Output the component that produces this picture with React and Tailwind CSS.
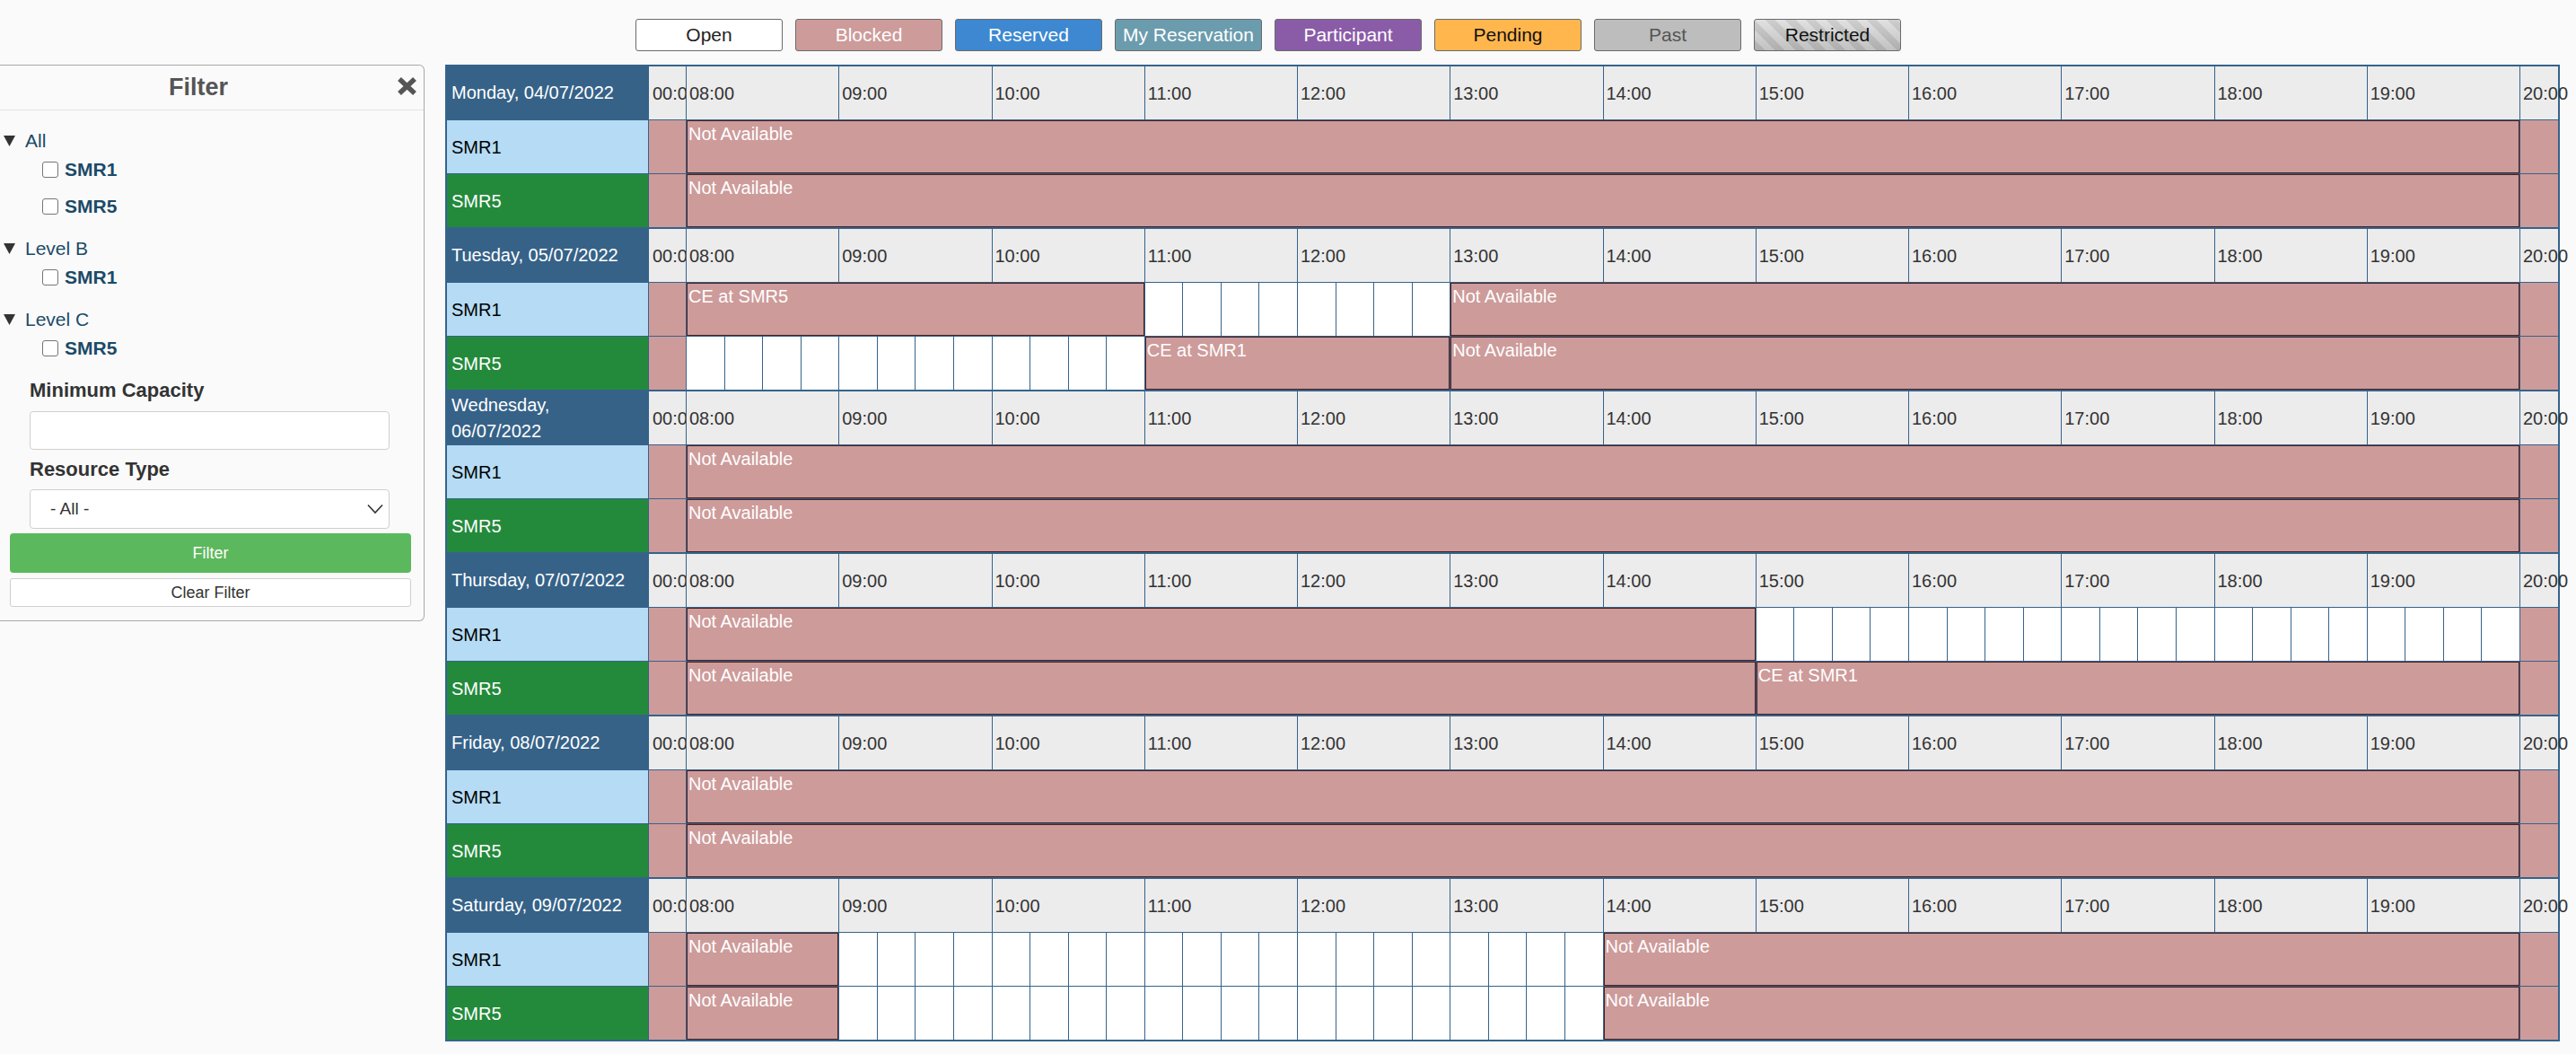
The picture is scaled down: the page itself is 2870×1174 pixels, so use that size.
import React from 'react';

const HOURS = ['08:00','09:00','10:00','11:00','12:00','13:00','14:00','15:00','16:00','17:00','18:00','19:00'];

const SPAN = {
  4: 'col-span-4',
  8: 'col-span-8',
  12: 'col-span-12',
  20: 'col-span-20',
  24: 'col-span-24',
  28: 'col-span-28',
  48: 'col-span-48',
};

const NA = 'Not Available';
const FULL = [['b', 48, NA]];

const DAYS = [
  { label: 'Monday, 04/07/2022', r1: FULL, r5: FULL },
  {
    label: 'Tuesday, 05/07/2022',
    r1: [['b', 12, 'CE at SMR5'], ['o', 8], ['b', 28, NA]],
    r5: [['o', 12], ['b', 8, 'CE at SMR1'], ['b', 28, NA]],
  },
  { label: 'Wednesday, 06/07/2022', r1: FULL, r5: FULL },
  {
    label: 'Thursday, 07/07/2022',
    r1: [['b', 28, NA], ['o', 20]],
    r5: [['b', 28, NA], ['b', 20, 'CE at SMR1']],
  },
  { label: 'Friday, 08/07/2022', r1: FULL, r5: FULL },
  {
    label: 'Saturday, 09/07/2022',
    r1: [['b', 4, NA], ['o', 20], ['b', 24, NA]],
    r5: [['b', 4, NA], ['o', 20], ['b', 24, NA]],
  },
];

const LEGEND = [
  { t: 'Open', c: 'bg-white text-[#222]' },
  { t: 'Blocked', c: 'bg-[#cd9b9a] text-white' },
  { t: 'Reserved', c: 'bg-[#3e88d1] text-white' },
  { t: 'My Reservation', c: 'bg-[#6b9cae] text-white' },
  { t: 'Participant', c: 'bg-[#8a5ca8] text-white' },
  { t: 'Pending', c: 'bg-[#ffb74d] text-[#111]' },
  { t: 'Past', c: 'bg-[#bdbdbd] text-[#555]' },
  {
    t: 'Restricted',
    c: 'text-[#111] bg-[image:linear-gradient(to_bottom,rgba(255,255,255,0.15),rgba(0,0,0,0.12)),repeating-linear-gradient(45deg,#c6c6c6_0px,#c6c6c6_8px,#dcdcdc_8px,#dcdcdc_16px)]',
  },
];

function Segments({ segs }) {
  const out = [];
  segs.forEach((s, i) => {
    if (s[0] === 'b') {
      out.push(
        <div
          key={i}
          className={`${SPAN[s[1]]} bg-[#cd9b9a] border border-[#4a2222] text-white text-[20px] leading-[1.43] pl-px overflow-hidden whitespace-nowrap`}
        >
          {s[2]}
        </div>
      );
    } else {
      for (let k = 0; k < s[1]; k++) {
        out.push(<div key={`${i}-${k}`} className="bg-white" />);
      }
    }
  });
  return out;
}

function Day({ day }) {
  return (
    <div className="grid grid-cols-[224px_41px_repeat(48,minmax(0,1fr))_42px] grid-rows-[59px_59px_59px] gap-px bg-[#35638b]">
      {/* header row */}
      <div className="bg-[#366288] text-white text-[20px] leading-[1.43] pl-[5px] pr-[5px] flex items-center">
        {day.label}
      </div>
      <div className="bg-[#ececec] text-[#333] text-[20px] pl-[4px] flex items-center overflow-hidden whitespace-nowrap">
        00:00
      </div>
      {HOURS.map((h) => (
        <div key={h} className="col-span-4 bg-[#ececec] text-[#333] text-[20px] pl-[3px] flex items-center whitespace-nowrap">
          {h}
        </div>
      ))}
      <div className="bg-[#ececec] text-[#333] text-[20px] pl-[3px] flex items-center whitespace-nowrap">
        20:00
      </div>

      {/* SMR1 */}
      <div className="bg-[#b5dbf5] text-black text-[20px] pl-[5px] flex items-center">SMR1</div>
      <div className="bg-[#cd9b9a]" />
      <Segments segs={day.r1} />
      <div className="bg-[#cd9b9a]" />

      {/* SMR5 */}
      <div className="bg-[#238a3c] text-white text-[20px] pl-[5px] flex items-center">SMR5</div>
      <div className="bg-[#cd9b9a]" />
      <Segments segs={day.r5} />
      <div className="bg-[#cd9b9a]" />
    </div>
  );
}

function Tri() {
  return (
    <svg width="13" height="12" viewBox="0 0 13 12" className="shrink-0">
      <polygon points="0,0 13,0 6.5,12" fill="#333" />
    </svg>
  );
}

function CheckItem({ label }) {
  return (
    <div className="h-[34px] flex items-center pl-[47px]">
      <div className="w-[18px] h-[18px] rounded-[3px] border border-[#767676] bg-white shrink-0" />
      <span className="ml-[7px] font-bold text-[21px] text-[#1b4a68]">{label}</span>
    </div>
  );
}

function Group({ title, items, last }) {
  return (
    <div className={last ? '' : 'mb-[15px]'}>
      <div className="h-[30px] flex items-center pl-[4px]">
        <Tri />
        <span className="ml-[11px] text-[21px] text-[#1b4a68]">{title}</span>
      </div>
      <div className="flex flex-col gap-[7px]">
        {items.map((it) => (
          <CheckItem key={it} label={it} />
        ))}
      </div>
    </div>
  );
}

function FilterPanel() {
  return (
    <div className="w-[473px] h-[620px] shrink-0 border border-l-0 border-[#a8a8a8] rounded-r-[6px] bg-[#fafafa] flex flex-col">
      <div className="h-[50px] border-b border-[#e3e3e3] flex items-center">
        <div className="flex-1 text-center font-bold text-[27px] text-[#555] pl-[0px]">Filter</div>
        <div className="w-[30px] flex items-center justify-start pb-[3px]">
          <svg width="23" height="22" viewBox="0 0 23 22">
            <path d="M3 3 L20 19 M20 3 L3 19" stroke="#555" strokeWidth="5.5" strokeLinecap="butt" />
          </svg>
        </div>
      </div>
      <div className="pt-[19px]">
        <Group title="All" items={['SMR1', 'SMR5']} />
        <Group title="Level B" items={['SMR1']} />
        <Group title="Level C" items={['SMR5']} last />
      </div>
      <div className="px-[33px] mt-[15px]">
        <div className="h-[28px] flex items-center font-bold text-[22px] text-[#333]">Minimum Capacity</div>
        <div className="mt-[10px] h-[43px] w-[401px] bg-white border border-[#cfcfcf] rounded-[4px]" />
        <div className="mt-[7px] h-[28px] flex items-center font-bold text-[22px] text-[#333]">Resource Type</div>
        <div className="mt-[9px] h-[44px] w-[401px] bg-white border border-[#cfcfcf] rounded-[4px] flex items-center justify-between pl-[22px] pr-[6px]">
          <span className="text-[19px] text-[#333]">- All -</span>
          <svg width="18" height="12" viewBox="0 0 18 12">
            <polyline points="1,1.5 9,10 17,1.5" fill="none" stroke="#333" strokeWidth="1.6" />
          </svg>
        </div>
      </div>
      <div className="px-[11px] mt-[5px]">
        <div className="h-[44px] w-[447px] bg-[#5cb85c] rounded-[4px] flex items-center justify-center text-white text-[18px]">
          Filter
        </div>
        <div className="mt-[6px] h-[32px] w-[447px] bg-white border border-[#cfcfcf] rounded-[3px] flex items-center justify-center text-[#333] text-[18px]">
          Clear Filter
        </div>
      </div>
    </div>
  );
}

export default function App() {
  return (
    <div className="min-h-[1174px] w-full bg-[#fafafa] font-['Liberation_Sans',Arial,Helvetica,sans-serif]">
      <div className="pt-[21px] ml-[708px] flex gap-[14px]">
        {LEGEND.map((l) => (
          <div
            key={l.t}
            className={`w-[164px] h-[36px] flex items-center justify-center border border-[#6a6a6a] rounded-[3px] text-[21px] whitespace-nowrap ${l.c}`}
          >
            {l.t}
          </div>
        ))}
      </div>
      <div className="mt-[15px] flex items-start gap-[23px]">
        <FilterPanel />
        <div className="w-[2356px] shrink-0 border-2 border-[#35638b] bg-[#35638b] flex flex-col gap-[2px]">
          {DAYS.map((d) => (
            <Day key={d.label} day={d} />
          ))}
        </div>
      </div>
    </div>
  );
}
